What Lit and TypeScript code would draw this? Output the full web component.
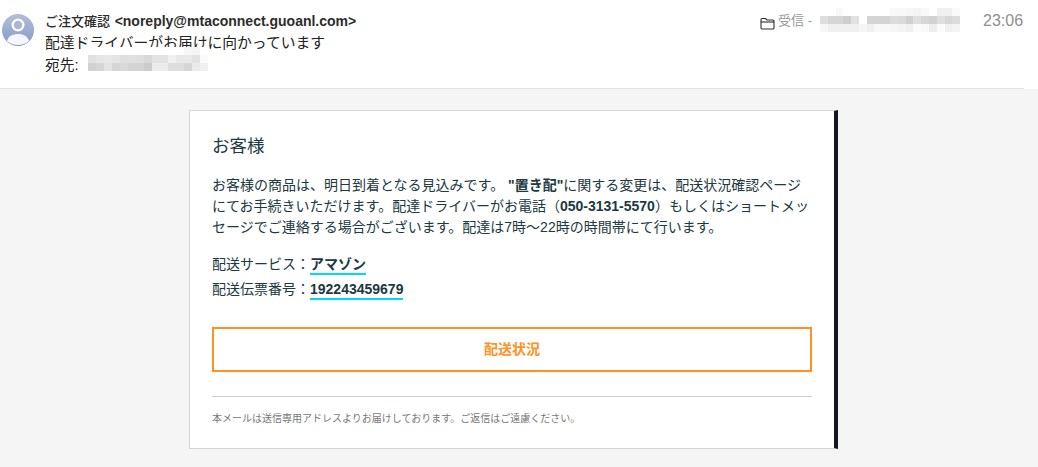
import { LitElement, html, css } from "lit";
import { customElement, property } from "lit/decorators.js";

const TO_CELLS = [
  [255, 255, 255, 255, 255, 255, 255, 255, 255, 255, 255, 255, 246, 244, 255],
  [224, 230, 232, 228, 222, 224, 222, 216, 226, 226, 240, 232, 232, 226, 250],
  [210, 214, 228, 214, 218, 212, 212, 204, 236, 236, 222, 222, 214, 234, 240],
];

const INBOX_CELLS = [
  [255, 255, 248, 255, 255, 255, 255, 255, 255, 248, 248, 246, 244, 248, 255, 240, 240, 250],
  [222, 214, 214, 206, 226, 255, 212, 212, 212, 220, 218, 208, 222, 214, 210, 222, 214, 220],
  [246, 240, 240, 240, 240, 245, 240, 248, 248, 246, 244, 240, 250, 248, 238, 250, 240, 244],
];

@customElement("blur-patch")
class BlurPatch extends LitElement {
  @property({ type: Array }) cells: number[][] = [];

  static styles = css`
    :host {
      display: block;
      flex: none;
    }
    .row {
      display: flex;
      height: 8px;
    }
    .row span {
      flex: 1;
    }
  `;

  render() {
    return this.cells.map(
      (row) => html`<div class="row">
        ${row.map((v) => html`<span style="background: rgb(${v},${v},${v})"></span>`)}
      </div>`
    );
  }
}

@customElement("app-root")
class AppRoot extends LitElement {
  static styles = css`
    :host {
      display: block;
      width: 1038px;
      height: 467px;
      overflow: hidden;
      background: #f5f5f5;
      font-family: "Liberation Sans", "Noto Sans CJK JP", sans-serif;
    }
    .header {
      display: flex;
      height: 89px;
      box-sizing: border-box;
      margin-right: 14px;
      border-bottom: 1px solid #e2e2e2;
      background: #fff;
      padding: 14px 0 0 2px;
      position: relative;
    }
    .header::after {
      content: "";
      position: absolute;
      right: -14px;
      top: 0;
      width: 14px;
      height: 89px;
      background: #fff;
    }
    .avatar {
      width: 32px;
      height: 32px;
      flex: none;
    }
    .who {
      margin-left: 11px;
      flex: 1;
      color: #222;
    }
    .from {
      font-size: 13px;
      font-weight: 500;
      line-height: 14px;
      color: #2c2c2c;
    }
    .from span {
      font-size: 14px;
      font-weight: 700;
      margin-left: 1px;
    }
    .subject {
      font-size: 14.8px;
      line-height: 20px;
      margin-top: 4px;
    }
    .to {
      display: flex;
      align-items: flex-start;
      font-size: 14.8px;
      line-height: 20px;
      margin-top: 2px;
      height: 20px;
    }
    .to blur-patch {
      width: 120px;
      margin: -8px 0 0 9px;
    }
    .meta {
      display: flex;
      align-items: flex-start;
      color: #999;
      font-size: 13px;
      line-height: 14px;
    }
    .folder {
      width: 15px;
      height: 13px;
      margin-top: 3px;
      margin-right: 3px;
    }
    .box {
      display: flex;
      align-items: flex-start;
      margin-right: 23px;
    }
    .box span {
      margin-right: 8px;
    }
    .box blur-patch {
      width: 140px;
      margin-top: -6px;
    }
    .time {
      font-size: 16px;
      color: #8f8f8f;
      width: 40px;
      margin-right: 1px;
    }
    .main {
      padding: 21px 0 0 189px;
    }
    .card {
      width: 649px;
      height: 339px;
      box-sizing: border-box;
      background: #fff;
      border: 1px solid #d5d5d5;
      border-right: 4px solid #16161d;
      padding: 25px 22px 0;
      color: #203840;
    }
    h1 {
      margin: 0;
      font-size: 17.5px;
      font-weight: 400;
      line-height: 20px;
    }
    .body {
      margin: 19px 0 0;
      font-size: 14px;
      line-height: 21px;
      width: 600px;
    }
    .facts {
      margin-top: 14px;
      font-size: 14px;
    }
    .fact {
      line-height: 25px;
    }
    .fact b {
      border-bottom: 2px solid #00d9f5;
      padding-bottom: 1px;
    }
    .cta {
      display: flex;
      align-items: center;
      justify-content: center;
      box-sizing: border-box;
      width: 600px;
      height: 45px;
      margin-top: 25px;
      padding-bottom: 3px;
      border: 2px solid #ff9123;
      color: #ff9123;
      font-size: 14px;
      font-weight: 700;
    }
    hr {
      width: 600px;
      margin: 24px 0 0;
      border: 0;
      border-top: 1px solid #cfcfcf;
    }
    .note {
      margin-top: 15px;
      font-size: 10px;
      line-height: 14px;
      color: #777;
    }
  `;

  render() {
    return html`
      <div class="header">
        <svg class="avatar" viewBox="0 0 32 32">
          <defs>
            <linearGradient id="av" x1="0" y1="0" x2="0" y2="1">
              <stop offset="0" stop-color="#b4bfd8" />
              <stop offset="1" stop-color="#8498c8" />
            </linearGradient>
            <clipPath id="avc"><circle cx="16" cy="16" r="16" /></clipPath>
          </defs>
          <circle cx="16" cy="16" r="16" fill="url(#av)" />
          <circle cx="16" cy="11" r="5.4" fill="#a9b6d6" stroke="#fff" stroke-width="2.2" />
          <g clip-path="url(#avc)">
            <path d="M5 27c1-4.5 5.5-7 11-7s10 2.5 11 7c-3 2.8-7 4-11 4s-8-1.2-11-4z" fill="#f4f6fb" />
          </g>
        </svg>
        <div class="who">
          <div class="from">ご注文確認 <span>&lt;noreply@mtaconnect.guoanl.com&gt;</span></div>
          <div class="subject">配達ドライバーがお届けに向かっています</div>
          <div class="to">
            <span>宛先:</span>
            <blur-patch .cells=${TO_CELLS}></blur-patch>
          </div>
        </div>
        <div class="meta">
          <svg class="folder" viewBox="0 0 15 13" fill="none" stroke="#2c2c2c" stroke-width="1.1">
            <path d="M1 11V2.5a1 1 0 0 1 1-1h3.5l1.5 1.5h6a1 1 0 0 1 1 1v7a1 1 0 0 1-1 1H2a1 1 0 0 1-1-1z" />
            <path d="M1 5h13" />
          </svg>
          <div class="box">
            <span>受信 -</span>
            <blur-patch .cells=${INBOX_CELLS}></blur-patch>
          </div>
          <div class="time">23:06</div>
        </div>
      </div>
      <div class="main">
        <div class="card">
          <h1>お客様</h1>
          <p class="body">
            お客様の商品は、明日到着となる見込みです。 <b>"置き配"</b>に関する変更は、配送状況確認ページにてお手続きいただけます。配達ドライバーがお電話（<b>050-3131-5570</b>）もしくはショートメッセージでご連絡する場合がございます。配達は7時～22時の時間帯にて行います。
          </p>
          <div class="facts">
            <div class="fact">配送サービス：<b>アマゾン</b></div>
            <div class="fact">配送伝票番号：<b>192243459679</b></div>
          </div>
          <div class="cta">配送状況</div>
          <hr />
          <div class="note">本メールは送信専用アドレスよりお届けしております。ご返信はご遠慮ください。</div>
        </div>
      </div>
    `;
  }
}
